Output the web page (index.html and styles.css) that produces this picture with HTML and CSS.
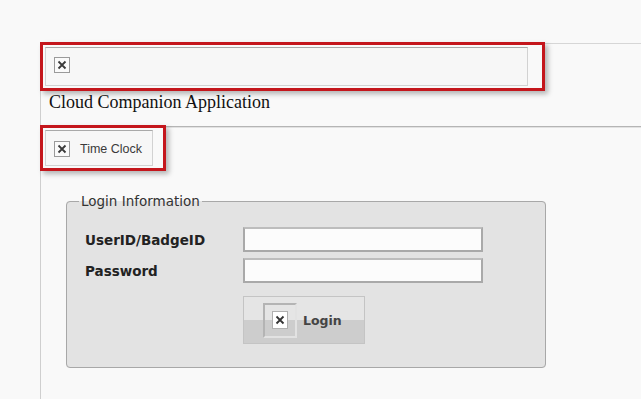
FILE: index.html
```html
<!DOCTYPE html>
<html lang="en">
<head>
  <meta charset="UTF-8">
  <title>Cloud Companion Application</title>
  <link rel="stylesheet" href="styles.css">
</head>
<body>
  <div class="page">
    <!-- banner image (missing) -->
    <div class="highlight banner-hl">
      <div class="img-box banner-img">
        <svg class="broken" width="16" height="16" viewBox="0 0 16 16">
          <rect x="0.5" y="0.5" width="15" height="15" fill="#fafafa" stroke="#9a9a9a"/>
          <path d="M4.5 4.5 L11.5 11.5 M11.5 4.5 L4.5 11.5" stroke="#3a3a3a" stroke-width="1.8"/>
        </svg>
      </div>
    </div>
    <div class="title">Cloud Companion Application</div>

    <div class="highlight tab-hl">
      <div class="img-box tab-img">
        <svg class="broken" width="16" height="16" viewBox="0 0 16 16">
          <rect x="0.5" y="0.5" width="15" height="15" fill="#fafafa" stroke="#9a9a9a"/>
          <path d="M4.5 4.5 L11.5 11.5 M11.5 4.5 L4.5 11.5" stroke="#3a3a3a" stroke-width="1.8"/>
        </svg>
        <span class="tab-text">Time Clock</span>
      </div>
    </div>

    <fieldset class="login">
      <legend>Login Information</legend>
      <div class="form-grid">
        <label for="user">UserID/BadgeID</label>
        <input type="text" id="user">
        <label for="pass">Password</label>
        <input type="password" id="pass">
        <span></span>
        <button class="login-btn" type="button">
          <span class="btn-frame">
            <svg width="16" height="18" viewBox="0 0 16 18">
              <rect x="0.5" y="0.5" width="15" height="17" fill="#ffffff" stroke="#b0b0b0"/>
              <path d="M4.5 5.5 L11.5 12.5 M11.5 5.5 L4.5 12.5" stroke="#333" stroke-width="1.8"/>
            </svg>
          </span>
          <span class="btn-text">Login</span>
        </button>
      </div>
    </fieldset>
  </div>
</body>
</html>
```

FILE: styles.css
```css
body {
  margin: 0;
  background: #f9f9f9;
  font-family: "DejaVu Sans", Verdana, sans-serif;
}

.page {
  margin: 43px 0 0 40px;
  height: 356px;
  border-left: 1px solid #cfcfcf;
  border-top: 1px solid #d6d6d6;
}

.highlight {
  border: 3px solid #c4161c;
  box-sizing: border-box;
  padding: 2px;
  box-shadow: 3px 3px 5px rgba(0, 0, 0, 0.28);
  margin-left: -1px;
}

.banner-hl {
  width: 505px;
  height: 49px;
  margin-top: -2px;
  padding-right: 14px;
}

.img-box {
  box-sizing: border-box;
  height: 100%;
  border: 1px solid #d2d2d2;
  border-top-color: #a9a9a9;
  background: #f7f7f7;
  display: flex;
  align-items: center;
  padding-left: 8px;
}

.banner-img {
  padding-bottom: 4px;
}

.title {
  font-family: "Liberation Serif", "Times New Roman", serif;
  font-size: 18px;
  color: #111;
  padding: 1px 0 0 8px;
  height: 34px;
  border-bottom: 1px solid #b5b5b5;
  box-shadow: 0 1px 0 #e2e2e2;
}

.tab-hl {
  width: 126px;
  height: 46px;
  margin-top: -2px;
  padding-right: 10px;
}

.tab-img {
  padding-top: 1px;
}

.tab-text {
  font-family: "Liberation Sans", Arial, sans-serif;
  font-size: 12.5px;
  color: #3a3a3a;
  margin-left: 10px;
}

.login {
  margin: 22px 0 0 25px;
  width: 480px;
  height: 175px;
  box-sizing: border-box;
  border: 1px solid #a8a8a8;
  border-radius: 4px;
  background: #e3e3e3;
  padding: 18px 0 0 18px;
}

.login legend {
  font-size: 13.5px;
  color: #333;
  padding: 0 2px;
  margin-left: -6px;
}

.form-grid {
  display: grid;
  grid-template-columns: 158px 240px;
  row-gap: 6px;
  align-items: center;
}

.form-grid label {
  font-weight: bold;
  font-size: 13.5px;
  color: #222;
}

.form-grid input {
  box-sizing: border-box;
  height: 25px;
  border: 2px solid #a9a9a9;
  border-top-color: #bdbdbd;
  background: #fcfcfc;
}

.login-btn {
  margin-top: 7px;
  width: 122px;
  height: 48px;
  box-sizing: border-box;
  border: 1px solid #c4c4c4;
  background: linear-gradient(#e5e5e5 50%, #cdcdcd 50%);
  display: flex;
  align-items: center;
  padding: 0 0 0 19px;
  cursor: pointer;
}

.btn-frame {
  box-sizing: border-box;
  width: 34px;
  height: 35px;
  border: 2px solid #b4b4b4;
  border-right-color: #e2e2e2;
  border-bottom-color: #e2e2e2;
  display: flex;
  align-items: center;
  justify-content: center;
}

.btn-frame svg {
  display: block;
}

.btn-text {
  font-family: "DejaVu Sans", Verdana, sans-serif;
  font-weight: bold;
  font-size: 12.5px;
  color: #444;
  margin-left: 6px;
}
```
